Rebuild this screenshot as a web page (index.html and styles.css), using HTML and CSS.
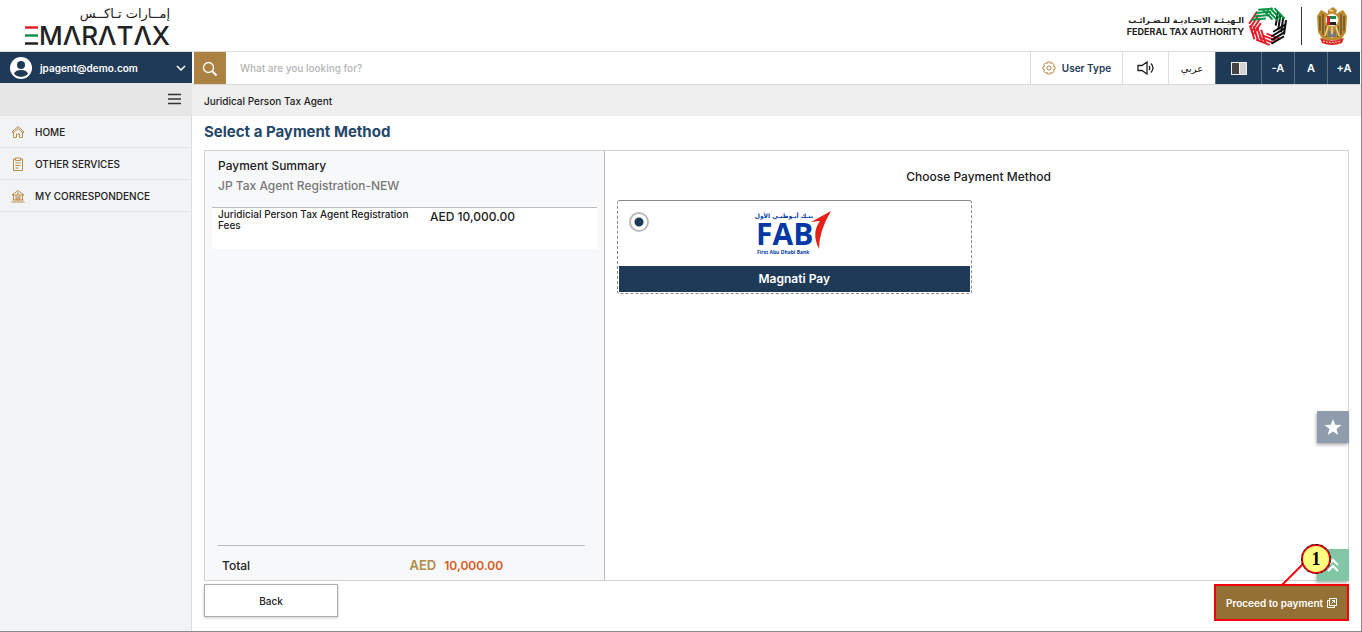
FILE: index.html
```
<!DOCTYPE html>
<html lang="en">
<head>
  <meta charset="UTF-8">
  <title>EmaraTax</title>
  <link rel="stylesheet" href="styles.css">
</head>
<body>
<header class="header">
  <svg class="logo" width="156" height="50" viewBox="0 0 156 50" role="img" aria-label="EMARATAX">
    <text class="logo-ar" x="148" y="17" text-anchor="end">إمــارات تـاكــس</text>
    <path d="M3 26.500h13" stroke="#e0202b" stroke-width="2.500"/>
    <path d="M3 34.500h13" stroke="#12924a" stroke-width="2.500"/>
    <path d="M3 42.500h13" stroke="#222" stroke-width="2.500"/>
    <text class="logo-en" x="17" y="44">MΛRΛTΛX</text>
  </svg>
  <div class="authority">
    <div class="authority-name">
      <span class="ar" lang="ar" dir="rtl">الـهيـئـة الاتحـاديـة للـضـرائـب</span>
      <span class="en">FEDERAL TAX AUTHORITY</span>
    </div>
    <svg width="40" height="40" viewBox="-20 -20 40 40" fill="none" stroke-width="2">
      <defs>
        <path id="stripes" d="M-11-14L2-7.500M-7.500-15.500L7-8.500M-4-17.500L10-10.500M0-19L13-12.500"/>
      </defs>
      <g stroke="#e31f2d">
        <use href="#stripes" transform="rotate(175)"/>
        <use href="#stripes" transform="rotate(226)"/>
        <use href="#stripes" transform="rotate(277)"/>
      </g>
      <g stroke="#111">
        <use href="#stripes" transform="rotate(72)"/>
        <use href="#stripes" transform="rotate(123)"/>
      </g>
      <g stroke="#0a9447">
        <use href="#stripes" transform="rotate(-31)"/>
        <use href="#stripes" transform="rotate(20)"/>
      </g>
    </svg>
    <span class="split"></span>
    <svg width="32" height="40" viewBox="0 0 32 40">
      <path d="M12 4l5-3 4 3-1 4 7-4 4 6-1 16-5 8H7l-5-8L1 10l4-6 7 4z" fill="#bd8b2f"/>
      <path d="M4 10v15M7 8v21M10 20v11M22 20v11M25 8v21M28 10v15" stroke="#58452a" stroke-width="1.200"/>
      <path d="M12 20l-3 10M16 21v11M20 20l3 10M13 4l4 1" stroke="#f1d58e" stroke-width="1.500"/>
      <path d="M12 23l4 6 4-6v8h-8z" fill="#777"/>
      <circle cx="16" cy="14" r="6.500" fill="#fff" stroke="#c8a14d"/>
      <path d="M12 10h8v3h-8z" fill="#16884a"/>
      <path d="M12 16h8v3h-8z" fill="#222"/>
      <path d="M11 10h3v9h-3z" fill="#d8232f"/>
      <path d="M4 32q12 5 24 0l-2 5q-10 4-20 0z" fill="#d92a2a"/>
      <path d="M7 35q9 3 18 0" stroke="#f6d7b0" fill="none" stroke-dasharray="2 1"/>
    </svg>
  </div>
</header>

<div class="layout">
  <aside class="sidebar">
    <button class="account" type="button">
      <svg width="22" height="22" viewBox="0 0 22 22">
        <circle cx="11" cy="11" r="11" fill="#fff"/>
        <circle cx="11" cy="8" r="4" fill="#1f3a57"/>
        <path d="M4 17q1-4 7-4t7 4q-3 3-7 3t-7-3z" fill="#1f3a57"/>
      </svg>
      <span>jpagent@demo.com</span>
      <svg class="chevron" width="10" height="6" viewBox="0 0 10 6"><path d="M1 1l4 4 4-4" fill="none" stroke="#fff" stroke-width="1.500"/></svg>
    </button>
    <div class="toggle">
      <button type="button" aria-label="Menu">
        <svg width="14" height="12" viewBox="0 0 14 12"><path d="M0 1.500h13M0 6h13M0 10.500h13" stroke="#333" stroke-width="1.300"/></svg>
      </button>
    </div>
    <nav class="menu">
      <a href="#">
        <svg class="icon" viewBox="0 0 14 14"><path d="M1 7l6-5.500L13 7l-1 1-5-4.500L2 8zM2.500 7.500v5h3V9h3v3.500h3v-5"/></svg>
        HOME
      </a>
      <a href="#">
        <svg class="icon" viewBox="0 0 14 14"><path d="M4.500 2H2.500v11.500h9V2h-2M4.500 1h5v2.500h-5zM4.500 6h5M4.500 8.500h5M4.500 11h3"/></svg>
        OTHER SERVICES
      </a>
      <a href="#">
        <svg class="icon" viewBox="0 0 14 14"><path d="M1 6l6-4.500L13 6zM2.500 6v5M5 6v5M9 6v5M11.500 6v5M1.500 11h11M.500 13h13M7 3v3M6 8h2v3H6z"/></svg>
        MY CORRESPONDENCE
      </a>
    </nav>
  </aside>

  <main class="main">
    <div class="toolbar">
      <button class="search-btn" type="submit" aria-label="Search">
        <svg width="16" height="16" viewBox="0 0 16 16" fill="none" stroke="#fff"><circle cx="6.500" cy="6.500" r="5" stroke-width="1.300"/><path d="M10.500 10.500l4 4" stroke-width="2"/></svg>
      </button>
      <input class="search" type="text" placeholder="What are you looking for?" aria-label="Search text">
      <button class="tool user-type" type="button">
        <svg width="14" height="14" viewBox="0 0 14 14" fill="none" stroke="#b98a4b"><circle cx="7" cy="7" r="2"/><path d="M5.700 1h2.600l.4 1.500 1.600-.7 1.800 1.900-.7 1.500 1.600.6v2.500l-1.600.5.7 1.500-1.800 1.900-1.600-.8L8.300 13H5.700l-.5-1.600-1.500.8-1.900-1.900.8-1.500L1 8.300V5.800l1.600-.6-.8-1.500 1.900-1.900 1.500.7z"/></svg>
        User Type
      </button>
      <button class="tool sound" type="button" aria-label="Read aloud">
        <svg width="18" height="14" viewBox="0 0 18 14" fill="none" stroke="#222" stroke-width="1.300"><path d="M1 4.500h4L10 1v12L5 9.500H1zM12 5q1.500 2 0 4M14 2.500q4 4.500 0 9"/></svg>
      </button>
      <button class="tool arabic" type="button" lang="ar">عربي</button>
      <button class="tool dark contrast" type="button" aria-label="Contrast">
        <svg width="16" height="13" viewBox="0 0 16 13"><path d="M0 0h16v13H0z" fill="#eee"/><path d="M1 1h7v11H1z" fill="#444"/><path d="M9 1h6v11H9z" fill="#d2d2d2"/></svg>
      </button>
      <button class="tool dark" type="button">-A</button>
      <button class="tool dark" type="button">A</button>
      <button class="tool dark" type="button">+A</button>
    </div>
    <div class="breadcrumb">Juridical Person Tax Agent</div>

    <div class="content">
      <h1>Select a Payment Method</h1>
      <div class="panels">
        <section class="summary">
          <h2>Payment Summary</h2>
          <p class="service">JP Tax Agent Registration-NEW</p>
          <div class="fee">
            <span class="fee-name">Juridicial Person Tax Agent Registration Fees</span>
            <span class="fee-value">AED 10,000.00</span>
          </div>
          <div class="total">
            <span class="total-name">Total</span>
            <span class="currency">AED</span>
            <span class="amount">10,000.00</span>
          </div>
        </section>
        <section class="methods">
          <h2>Choose Payment Method</h2>
          <div class="method-list">
            <label class="method">
              <span class="method-top">
                <input type="radio" name="method" checked>
                <svg width="84" height="50" viewBox="-4 0 84 50" role="img" aria-label="First Abu Dhabi Bank">
                  <text class="fab-ar" x="57" y="8" text-anchor="end">بنـك أبـوظبـي الأول</text>
                  <text class="fab" x="0" y="35">FAB</text>
                  <text class="fab-en" x="1" y="44">First Abu Dhabi Bank</text>
                  <path d="M75 1L55 12q6-1 9-1-9 12-1 28 0-18 12-38z" fill="#e42219"/>
                </svg>
              </span>
              <span class="method-name">Magnati Pay</span>
            </label>
          </div>
        </section>
        <button class="float star" type="button" aria-label="Favourites">
          <svg width="18" height="18" viewBox="0 0 18 18"><path d="M9 1l2.200 5.800 6.300.2-5 3.900 1.800 6.100L9 13.500 3.700 17l1.800-6.100-5-3.900 6.300-.2z" fill="#fff"/></svg>
        </button>
        <button class="float up" type="button" aria-label="Back to top">
          <svg width="12" height="14" viewBox="0 0 12 14" fill="none" stroke="#fff" stroke-width="2"><path d="M1 7l5-5 5 5M1 13l5-5 5 5"/></svg>
        </button>
      </div>
      <div class="actions">
        <button class="back" type="button">Back</button>
        <div class="proceed-wrap">
          <button class="proceed" type="button">
            Proceed to payment
            <svg width="10" height="10" viewBox="0 0 10 10" fill="none" stroke="#fff"><path d="M2.500.500h7v7h-7zM2.500 2.500h-2v7h7v-2M4.500 5.500l3-3M5 2.500h2.500V5"/></svg>
          </button>
          <svg class="pointer" width="24" height="24" viewBox="0 0 24 24"><path d="M1 23L23 1" stroke="#f2000d" stroke-width="2"/></svg>
          <span class="step">1</span>
        </div>
      </div>
    </div>
  </main>
</div>
</body>
</html>
```
FILE: styles.css
```
* {
  box-sizing: border-box;
}

body {
  margin: 0;
  min-height: 100vh;
  display: flex;
  flex-direction: column;
  border-right: 1px solid #8a8a8a;
  border-bottom: 1px solid #8a8a8a;
  font-family: Inter, "DejaVu Sans", sans-serif;
  font-size: 12px;
  color: #222;
  background: #fff;
}

button {
  font: inherit;
  color: inherit;
  border: 0;
  padding: 0;
  background: none;
}

h1, h2, p {
  margin: 0;
}

.header {
  display: flex;
  justify-content: space-between;
  align-items: center;
  height: 52px;
  padding: 0 13px 0 22px;
  border-bottom: 1px solid #ddd;
}

.logo-ar {
  font: 13px "DejaVu Sans", sans-serif;
  fill: #222;
}

.logo-en {
  font: 500 26px Inter, sans-serif;
  fill: #222;
}

.authority {
  display: flex;
  align-items: center;
}

.authority-name {
  display: flex;
  flex-direction: column;
  align-items: flex-end;
  margin-right: 4px;
  font-weight: 700;
  line-height: 11px;
}

.authority-name .ar {
  font-family: "DejaVu Sans", sans-serif;
  font-size: 8px;
}

.authority-name .en {
  font-size: 9px;
}

.split {
  width: 1px;
  height: 38px;
  margin: 0 14px 0 13px;
  background: #333;
}

.layout {
  flex: 1;
  display: grid;
  grid-template-columns: 192px 1fr;
}

.sidebar {
  background: #f1f3f5;
  box-shadow: inset -1px 0 #ddd;
}

.account {
  display: flex;
  align-items: center;
  gap: 8px;
  width: 100%;
  height: 31px;
  padding: 0 6px 0 10px;
  background: #1f3a57;
  color: #fff;
  font-size: 10px;
  font-weight: 600;
}

.chevron {
  margin-left: auto;
}

.toggle {
  display: flex;
  justify-content: flex-end;
  align-items: center;
  height: 33px;
  padding: 2px 10px 0 0;
  background: #e6e6e6;
}

.menu a {
  display: flex;
  align-items: center;
  gap: 10px;
  height: 32px;
  padding-left: 11px;
  border-bottom: 1px solid #e3e5e7;
  color: #222;
  font-size: 10px;
  font-weight: 500;
  text-decoration: none;
}

.icon {
  width: 14px;
  height: 14px;
  fill: none;
  stroke: #b98f4a;
}

.main {
  display: flex;
  flex-direction: column;
}

.toolbar {
  display: flex;
  height: 33px;
  padding: 0 1px 0 2px;
  border-bottom: 1px solid #d8d8d8;
}

.search-btn {
  width: 32px;
  padding-top: 4px;
  background: #ab8241;
}

.search {
  flex: 1;
  border: 0;
  padding: 0 14px;
  font: 500 10px Inter, sans-serif;
}

.search::placeholder {
  color: #b5b5b5;
}

.tool {
  display: flex;
  justify-content: center;
  align-items: center;
  width: 33px;
  border-left: 1px solid #ddd;
  font-size: 11px;
  font-weight: 600;
}

.user-type {
  width: 92px;
  gap: 6px;
  color: #1f3a57;
  font-size: 10px;
}

.sound {
  width: 46px;
}

.arabic {
  width: 47px;
  font-family: "DejaVu Sans", sans-serif;
  font-size: 10px;
  font-weight: 400;
}

.dark {
  background: #1f3a57;
  border-color: #5b6f85;
  color: #fff;
}

.contrast {
  width: 46px;
}

.breadcrumb {
  height: 31px;
  padding-left: 12px;
  background: #efefef;
  font-size: 10px;
  font-weight: 500;
  line-height: 33px;
}

.content {
  flex: 1;
  display: flex;
  flex-direction: column;
  padding: 0 12px 10px;
}

h1 {
  height: 34px;
  color: #24476a;
  font-size: 15px;
  font-weight: 700;
  line-height: 31px;
}

.panels {
  position: relative;
  flex: 1;
  display: grid;
  grid-template-columns: 35% 1fr;
  border: 1px solid #d0d2d4;
}

h2 {
  font-size: 12px;
  font-weight: 500;
}

.summary {
  display: flex;
  flex-direction: column;
  padding: 5px 7px 4px;
  background: #f7f8fa;
  border-right: 1px solid #bbb;
}

.summary h2,
.service {
  padding-left: 6px;
  line-height: 20px;
}

.service {
  color: #777;
  font-weight: 500;
}

.fee {
  display: flex;
  gap: 12px;
  min-height: 42px;
  margin-top: 11px;
  padding: 0 6px;
  border-top: 1px solid #bbb;
  background: #fff;
}

.fee-name {
  width: 200px;
  padding-top: 1px;
  font-size: 10px;
  font-weight: 500;
  line-height: 11px;
}

.fee-value {
  font-weight: 500;
  line-height: 17px;
}

.total {
  display: flex;
  align-items: center;
  height: 31px;
  margin: auto 12px 0 6px;
  padding: 8px 4px 0;
  border-top: 1px solid #bbb;
  font-weight: 500;
}

.total-name {
  width: 50%;
  padding-right: 4px;
}

.currency {
  margin-left: 8px;
  color: #b08a45;
  font-size: 13px;
  font-weight: 600;
}

.amount {
  margin-left: 8px;
  color: #d95b22;
  font-weight: 600;
}

.methods h2 {
  padding: 16px 0 13px 4px;
  line-height: 20px;
  text-align: center;
}

.method-list {
  display: grid;
  grid-template-columns: 1fr 1fr;
  gap: 10px;
  padding: 0 12px;
}

.method {
  padding: 1px;
  border: 1px dashed #888;
  border-top-style: solid;
  border-radius: 3px;
}

.method-top {
  display: flex;
  justify-content: center;
  position: relative;
  height: 64px;
  padding-top: 8px;
}

.method input {
  appearance: none;
  position: absolute;
  left: 10px;
  top: 10px;
  width: 20px;
  height: 20px;
  margin: 0;
  border: 2px solid #bbb;
  border-radius: 50%;
  background: radial-gradient(#1f3a57 4px, #fff 5px);
}

.fab {
  font: 700 30px "Open Sans", sans-serif;
  fill: #0039a6;
}

.fab-ar {
  font: 700 6px "DejaVu Sans", sans-serif;
  fill: #0039a6;
}

.fab-en {
  font: 700 5px "Open Sans", sans-serif;
  fill: #0039a6;
}

.method-name {
  display: block;
  background: #1f3a57;
  color: #fff;
  font-weight: 600;
  line-height: 26px;
  text-align: center;
}

.float {
  display: flex;
  justify-content: center;
  align-items: center;
  position: absolute;
  right: -1px;
  width: 32px;
  height: 32px;
  box-shadow: -1px 2px 3px rgba(0, 0, 0, .3);
}

.star {
  bottom: 137px;
  background: #8f9cab;
}

.up {
  bottom: -1px;
  background: #81c7a6;
}

.actions {
  display: flex;
  justify-content: space-between;
  align-items: flex-start;
  padding-top: 3px;
}

.back {
  width: 134px;
  height: 33px;
  border: 1px solid #aaa;
  box-shadow: 0 1px 3px rgba(0, 0, 0, .2);
  font-size: 10px;
  font-weight: 500;
}

.proceed-wrap {
  position: relative;
}

.proceed {
  display: flex;
  justify-content: center;
  align-items: center;
  gap: 4px;
  width: 135px;
  height: 37px;
  border: 2px solid #f2000d;
  background: #947034;
  color: #fff;
  font-size: 10px;
  font-weight: 600;
}

.pointer {
  position: absolute;
  left: 67px;
  top: -22px;
}

.step {
  position: absolute;
  left: 87px;
  top: -40px;
  width: 30px;
  height: 30px;
  border: 2px solid #f2000d;
  border-radius: 50%;
  outline: 1px dashed #222;
  outline-offset: -1px;
  background: #ffff80;
  color: #000;
  font: 700 18px/26px "Liberation Serif", serif;
  text-align: center;
}
```
